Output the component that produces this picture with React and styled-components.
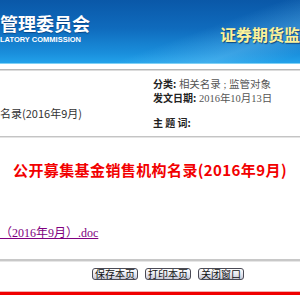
import React from "react";
import styled, { createGlobalStyle } from "styled-components";

const Global = createGlobalStyle`
  html, body { margin: 0; padding: 0; background: #fff; }
  body { width: 300px; height: 300px; overflow: hidden; font-family: "Liberation Serif", "Noto Sans CJK SC", serif; }
`;

const Page = styled.div`
  width: 300px;
  display: flex;
  flex-direction: column;
`;

const Header = styled.div`
  height: 63px;
  display: flex;
  justify-content: space-between;
  overflow: hidden;
  white-space: nowrap;
  background:
    linear-gradient(160deg, rgba(255,255,255,0) 60%, rgba(120,200,245,0.35) 80%, rgba(255,255,255,0) 95%),
    linear-gradient(180deg, #0a58a8 0%, #0f6bbd 45%, #1a8fdc 85%, #22a2ea 100%);
  border-bottom: 1px solid #7fd0f4;
`;

const Logo = styled.div`
  display: flex;
  flex-direction: column;
  padding-top: 12px;
  font-family: "Noto Sans CJK SC", sans-serif;
  color: #fff;
`;

const LogoCn = styled.div`
  font-size: 18px;
  font-weight: 700;
  line-height: 22px;
  text-shadow: 0 1px 1px rgba(0,30,80,0.5);
`;

const LogoEn = styled.div`
  font-family: "Liberation Sans", Arial, sans-serif;
  font-size: 7.5px;
  font-weight: 700;
  line-height: 9px;
  margin-top: 1px;
`;

const Slogan = styled.div`
  padding-top: 22px;
  width: 80px;
  overflow: hidden;
  font-family: "Noto Sans CJK SC", sans-serif;
  font-size: 16px;
  font-weight: 700;
  color: #fbf19a;
  text-shadow: 1px 1px 1px rgba(0,40,90,0.7);
`;

const Rule = styled.div`
  height: ${p => p.$h}px;
  background: ${p => p.$c};
  margin-top: ${p => p.$mt || 0}px;
  border-bottom: ${p => (p.$shade ? `1px solid ${p.$shade}` : "none")};
`;

const Meta = styled.div`
  display: flex;
  height: 65px;
`;

const MetaLeft = styled.div`
  width: 153px;
  padding-top: 35px;
  font-size: 11px;
  color: #333;
  font-family: "Noto Sans CJK SC", sans-serif;
  line-height: 14px;
`;

const MetaRight = styled.div`
  display: flex;
  flex-direction: column;
  padding-top: 6px;
`;

const MetaRow = styled.div`
  height: 14px;
  line-height: 14px;
  font-size: 10.5px;
  color: #333;
  white-space: nowrap;
  overflow: visible;
  margin-bottom: ${p => p.$gap || 0}px;
  font-family: "Liberation Serif", "Noto Sans CJK SC", serif;
`;

const Label = styled.span`
  font-family: "Noto Sans CJK SC", sans-serif;
  font-weight: 700;
  font-size: 10px;
  color: #222;
`;

const Value = styled.span`
  color: #555;
`;

const Title = styled.h1`
  margin: 22px 0 0;
  padding-left: 13px;
  font-family: "Noto Sans CJK SC", sans-serif;
  font-size: 15px;
  font-weight: 700;
  line-height: 20px;
  color: #f20000;
  white-space: nowrap;
  letter-spacing: 0.4px;
`;

const Attach = styled.a`
  display: block;
  margin-top: 46px;
  width: max-content;
  font-family: "Liberation Serif", "Noto Sans CJK SC", serif;
  font-size: 12px;
  line-height: 14px;
  color: #800080;
  text-decoration: underline;
`;

const Buttons = styled.div`
  display: flex;
  gap: 7px;
  padding-left: 92px;
  margin-top: 6px;
`;

const Btn = styled.button`
  width: 46px;
  height: 12px;
  padding: 0;
  border: 1px solid #4a4a55;
  border-radius: 3px;
  background: linear-gradient(180deg, #ffffff 0%, #e8e8f0 50%, #c9cad8 100%);
  font-family: "Noto Sans CJK SC", sans-serif;
  font-size: 10px;
  line-height: 10px;
  color: #111;
  display: flex;
  align-items: center;
  justify-content: center;
`;

export default function App() {
  return (
    <>
      <Global />
      <Page>
        <Header>
          <Logo>
            <LogoCn>管理委员会</LogoCn>
            <LogoEn>LATORY COMMISSION</LogoEn>
          </Logo>
          <Slogan>证券期货监管</Slogan>
        </Header>
        <Rule $h={5} $c="#fff" />
        <Rule $h={1} $c="#b8b8b8" $shade="#dcdcdc" />
        <Meta>
          <MetaLeft>名录(2016年9月)</MetaLeft>
          <MetaRight>
            <MetaRow><Label>分类:</Label> <Value>相关名录 ; 监管对象</Value></MetaRow>
            <MetaRow $gap={11}><Label>发文日期:</Label> <Value>2016年10月13日</Value></MetaRow>
            <MetaRow><Label>主 题 词:</Label></MetaRow>
          </MetaRight>
        </Meta>
        <Rule $h={1} $c="#c4c4c4" $shade="#e4e4e4" />
        <Title>公开募集基金销售机构名录(2016年9月)</Title>
        <Attach href="#">（2016年9月）.doc</Attach>
        <Rule $h={2} $c="#c8c8c8" $mt={19} $shade="#e6e6e6" />
        <Buttons>
          <Btn>保存本页</Btn>
          <Btn>打印本页</Btn>
          <Btn>关闭窗口</Btn>
        </Buttons>
        <Rule $h={1} $c="#f4b0b0" $mt={11} />
        <Rule $h={3} $c="#f00000" />
      </Page>
    </>
  );
}
